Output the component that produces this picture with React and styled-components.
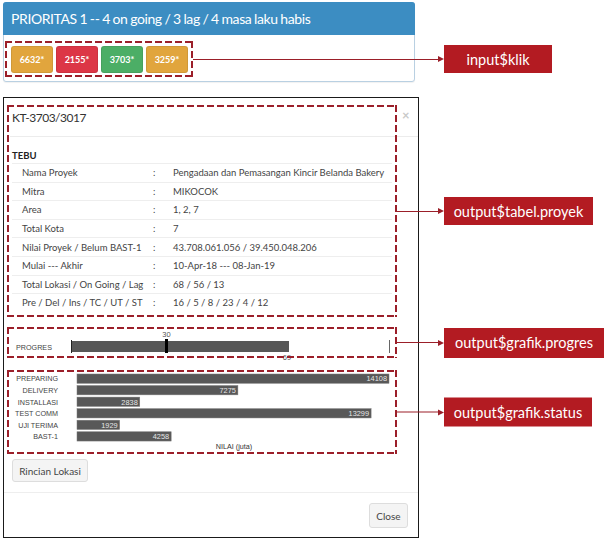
import React from "react";
import styled, { createGlobalStyle } from "styled-components";

const DASH = "#9b1f29";

const GlobalStyle = createGlobalStyle`
  html, body { margin:0; padding:0; background:#fff; }
  body { font-family: Lato, "Open Sans", sans-serif; color:#333; }
  * { box-sizing:border-box; }
`;

const tombol = [
    { kode: "6632*", warna: "#e1a53d" },
    { kode: "2155*", warna: "#dc3646" },
    { kode: "3703*", warna: "#4cae66" },
    { kode: "3259*", warna: "#e1a53d" },
];

const proyek = [
    ["Nama Proyek", "Pengadaan dan Pemasangan Kincir Belanda Bakery"],
    ["Mitra", "MIKOCOK"],
    ["Area", "1, 2, 7"],
    ["Total Kota", "7"],
    ["Nilai Proyek / Belum BAST-1", "43.708.061.056 / 39.450.048.206"],
    ["Mulai --- Akhir", "10-Apr-18 --- 08-Jan-19"],
    ["Total Lokasi / On Going / Lag", "68 / 56 / 13"],
    ["Pre / Del / Ins / TC / UT / ST", "16 / 5 / 8 / 23 / 4 / 12"],
];

const status = [
    ["PREPARING", 14108],
    ["DELIVERY", 7275],
    ["INSTALLASI", 2838],
    ["TEST COMM", 13299],
    ["UJI TERIMA", 1929],
    ["BAST-1", 4258],
];

function Penjelasan({ teks, panjang, lebar, tinggi }) {
    return (
        <Callout>
            <Lead $len={panjang} />
            <Arrow />
            <Tag $w={lebar} $h={tinggi}>{teks}</Tag>
        </Callout>
    );
}

function GrafikProgres() {
    return (
        <Chart width="386" height="27">
            <text x="7" y="21" fontSize="7.2" fill="#444">PROGRES</text>
            <text x="157.5" y="8" fontSize="7.5" fill="#555" textAnchor="middle">30</text>
            <rect x="62" y="12" width="218" height="11" fill="#575757" />
            <line x1="62.5" y1="11" x2="62.5" y2="24" stroke="#222" />
            <rect x="156" y="10" width="3" height="14" fill="#000" />
            <line x1="380.5" y1="11" x2="380.5" y2="24" stroke="#666" />
            <text x="278" y="30.5" fontSize="7.5" fill="#555" textAnchor="middle">69</text>
        </Chart>
    );
}

function GrafikStatus() {
    const skala = 312 / 14108;
    return (
        <Chart width="386" height="80">
            {status.map(([nama, nilai], i) => {
                const atas = 2 + i * 11.55;
                const w = nilai * skala;
                return (
                    <g key={nama}>
                        <text x="49" y={atas + 7.4} fontSize="7.2" fill="#444" textAnchor="end">{nama}</text>
                        <rect x="68" y={atas} width={w} height="9.3" fill="#585858" stroke="#7a7a7a" strokeWidth="0.5" />
                        <text x={68 + w - 2} y={atas + 7.4} fontSize="7.4" fill="#e6e6e6" textAnchor="end">{nilai}</text>
                    </g>
                );
            })}
            <text x="225" y="77" fontSize="7.2" fill="#333" textAnchor="middle">NILAI (juta)</text>
        </Chart>
    );
}

export default function App() {
    return (
        <Page>
            <GlobalStyle />
            <Panel>
                <PanelHeader>PRIORITAS 1 -- 4 on going / 3 lag / 4 masa laku habis</PanelHeader>
                <PanelBody>
                    <ButtonGroup>
                        {tombol.map((t) => (
                            <KodeButton key={t.kode} $bg={t.warna}>{t.kode}</KodeButton>
                        ))}
                        <Penjelasan teks="input$klik" panjang={245} lebar={108} tinggi={28} />
                    </ButtonGroup>
                </PanelBody>
            </Panel>

            <Modal>
                <ModalTop>
                    <TableBox>
                        <ModalTitle>KT-3703/3017</ModalTitle>
                        <Group>TEBU</Group>
                        {proyek.map(([label, nilai]) => (
                            <Row key={label}>
                                <Label>{label}</Label>
                                <span>:</span>
                                <span>{nilai}</span>
                            </Row>
                        ))}
                        <Penjelasan teks="output$tabel.proyek" panjang={41} lebar={149} tinggi={28} />
                    </TableBox>
                    <CloseX>×</CloseX>
                </ModalTop>

                <ProgresBox>
                    <GrafikProgres />
                    <Penjelasan teks="output$grafik.progres" panjang={41} lebar={160} tinggi={30} />
                </ProgresBox>

                <StatusBox>
                    <GrafikStatus />
                    <Penjelasan teks="output$grafik.status" panjang={41} lebar={148} tinggi={29} />
                </StatusBox>

                <Button $w={76} $h={23} style={{ marginLeft: 8, marginTop: 5 }}>Rincian Lokasi</Button>

                <Footer>
                    <Button $w={39} $h={25}>Close</Button>
                </Footer>
            </Modal>
        </Page>
    );
}

const Page = styled.div`
    width:606px;
    height:538px;
    overflow:hidden;
    padding:2px 0 0 3px;
    display:flex;
    flex-direction:column;
    align-items:flex-start;
`

const Panel = styled.div`
    width:412px;
    height:80px;
    border:1px solid #b9d0e2;
    border-radius:3px;
    background:#fff;
    box-shadow:0 1px 1px rgba(0,0,0,0.06);
`

const PanelHeader = styled.div`
    margin:-1px -1px 0;
    height:33px;
    padding-left:8px;
    line-height:33px;
    background:#3c8dc2;
    border-radius:3px 3px 0 0;
    color:#fff;
    font-size:14px;
    letter-spacing:-0.4px;
    word-spacing:-0.5px;
    white-space:nowrap;
`

const PanelBody = styled.div`
    padding:6px 0 0 1px;
`

const Highlight = styled.div`
    position:relative;
    &::after {
        content:"";
        position:absolute;
        inset:0;
        pointer-events:none;
        background:
            repeating-linear-gradient(90deg, ${DASH} 0 7px, transparent 7px 10px) top left / 100% 2px no-repeat,
            repeating-linear-gradient(90deg, ${DASH} 0 7px, transparent 7px 10px) bottom left / 100% 2px no-repeat,
            repeating-linear-gradient(180deg, ${DASH} 0 7px, transparent 7px 10px) top left / 2px 100% no-repeat,
            repeating-linear-gradient(180deg, ${DASH} 0 7px, transparent 7px 10px) top right / 2px 100% no-repeat;
    }
`

const ButtonGroup = styled(Highlight)`
    width:188px;
    height:36px;
    display:flex;
    gap:3px;
    padding:5px 0 0 6px;
`

const KodeButton = styled.div`
    width:42px;
    height:27px;
    display:flex;
    align-items:center;
    justify-content:center;
    background:${p => p.$bg};
    border:1px solid rgba(0,0,0,0.08);
    border-radius:3px;
    color:#fff;
    font-size:9px;
    font-weight:700;
`

const Callout = styled.div`
    position:absolute;
    left:100%;
    top:50%;
    transform:translateY(-50%);
    display:flex;
    align-items:center;
`

const Lead = styled.span`
    display:block;
    width:${p => p.$len}px;
    height:1px;
    background:${DASH};
`

const Arrow = styled.span`
    display:block;
    width:0;
    height:0;
    border-top:3px solid transparent;
    border-bottom:3px solid transparent;
    border-left:6px solid ${DASH};
`

const Tag = styled.span`
    display:flex;
    align-items:center;
    justify-content:center;
    width:${p => p.$w}px;
    height:${p => p.$h}px;
    background:#b31b22;
    color:#fff;
    font-size:14.5px;
    white-space:nowrap;
`

const Modal = styled.div`
    margin-top:15px;
    width:416px;
    height:441px;
    border:1px solid #1a1a1a;
    background:#fff;
    display:flex;
    flex-direction:column;
    align-items:flex-start;
`

const ModalTop = styled.div`
    display:flex;
    align-items:flex-start;
    gap:5px;
    padding:7px 0 0 3px;
`

const TableBox = styled(Highlight)`
    width:390px;
    height:212px;
    padding:0 5px;
`

const ModalTitle = styled.div`
    position:relative;
    height:32px;
    padding-top:5px;
    line-height:16px;
    font-size:12px;
    letter-spacing:-0.5px;
    color:#333;
    &::after {
        content:"";
        position:absolute;
        left:-2px;
        right:-26px;
        bottom:0;
        height:1px;
        background:#ececec;
    }
`

const Group = styled.div`
    margin-top:12px;
    line-height:14px;
    font-size:9.5px;
    font-weight:700;
    color:#222;
`

const Row = styled.div`
    display:grid;
    grid-template-columns:141px 20px 1fr;
    align-items:center;
    height:18.6px;
    border-top:1px solid #eeeeee;
    font-size:9.5px;
    color:#444;
    white-space:nowrap;
`

const Label = styled.span`
    padding-left:10px;
`

const CloseX = styled.div`
    margin-top:3px;
    font-size:13px;
    line-height:14px;
    font-weight:700;
    color:#c9c9c9;
`

const ProgresBox = styled(Highlight)`
    width:390px;
    height:31px;
    margin:10px 0 0 3px;
    padding:2px;
`

const StatusBox = styled(Highlight)`
    width:390px;
    height:84px;
    margin:12px 0 0 3px;
    padding:2px;
`

const Chart = styled.svg`
    display:block;
    overflow:visible;
    font-family:"Liberation Sans", Arial, sans-serif;
`

const Button = styled.div`
    width:${p => p.$w}px;
    height:${p => p.$h}px;
    display:flex;
    align-items:center;
    justify-content:center;
    background:#f4f4f4;
    border:1px solid #dddddd;
    border-radius:3px;
    font-size:10px;
    color:#444;
`

const Footer = styled.div`
    margin-top:auto;
    align-self:stretch;
    display:flex;
    justify-content:flex-end;
    padding:10px 10px 9px;
    border-top:1px solid #eeeeee;
`
